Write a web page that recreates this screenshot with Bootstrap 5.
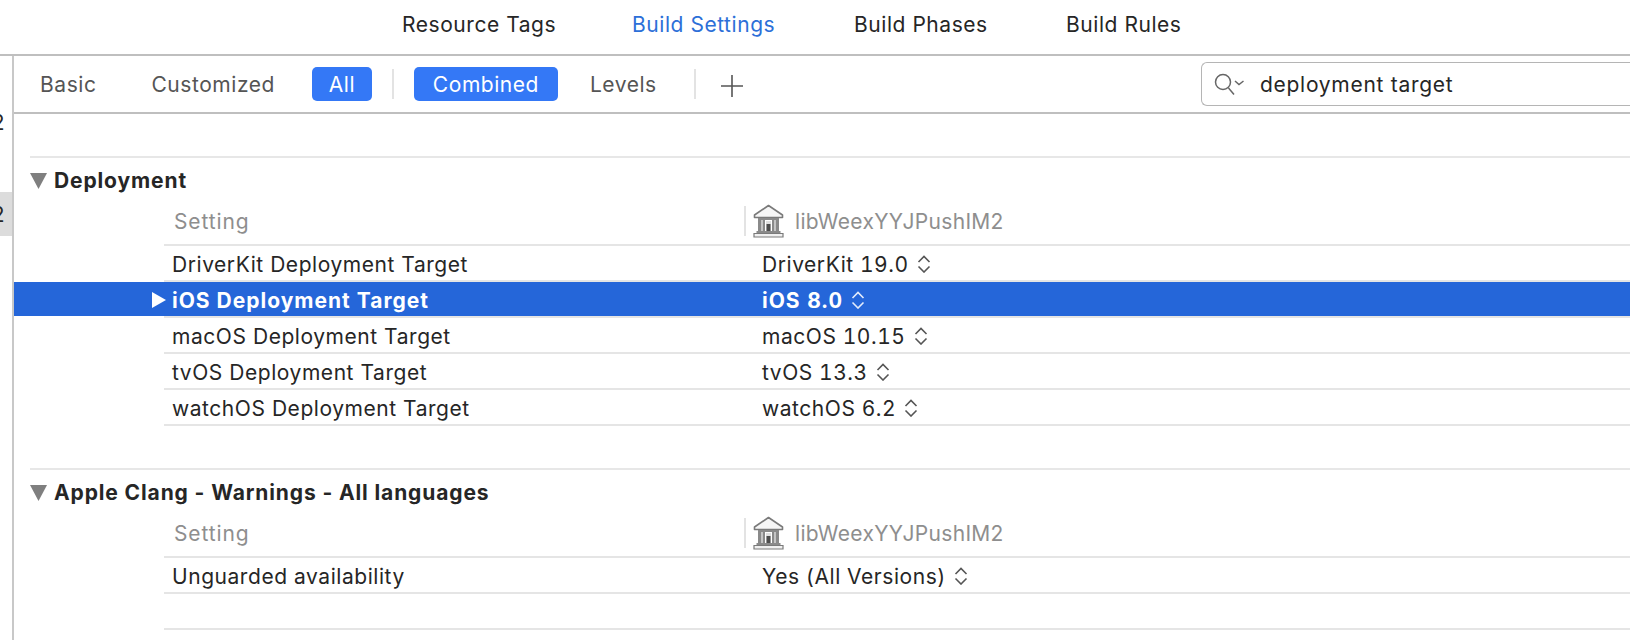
<!DOCTYPE html>
<html lang="en">
<head>
<meta charset="utf-8">
<title>Build Settings</title>
<link href="https://cdn.jsdelivr.net/npm/bootstrap@5.3.0/dist/css/bootstrap.min.css" rel="stylesheet">
<style>
html,body{height:640px;overflow:hidden;background:#fff}
body{font-family:Inter,"Liberation Sans",sans-serif;font-size:21px;letter-spacing:.55px;color:#262626;line-height:1}
.tabs-bar{height:56px;border-bottom:2px solid #bfbfbf;padding-left:402px;padding-bottom:6px}
.tab-item{width:230px}
.tab-item.tab-2{width:222px}
.tab-item.tab-3{width:212px}
.tab-active{color:#2c6fd8}
.shell{height:584px}
.side{width:14px;flex:none;border-right:2px solid #c8c8c8;overflow:hidden;padding-top:58px}
.side-cell{height:16px;width:12px;display:flex;align-items:center;line-height:1}
.side-clip{width:5px;overflow:hidden;display:flex;justify-content:flex-end;white-space:nowrap}
.side-gray{background:#dcdcdc;height:44px;margin-top:62px}
.tools{height:58px;border-bottom:2px solid #bfbfbf;padding-left:26px;overflow:hidden}
.tool-txt{color:#555}
.pill-on{background:#3478f6;color:#fff;height:34px;border-radius:5px;display:flex;align-items:center;justify-content:center}
.sep{width:2px;height:30px;background:#e3e3e3;flex:none}
.search-box{margin-left:auto;width:460px;height:44px;border:1px solid #b5b5b5;border-right:0;border-radius:6px 0 0 6px;padding-left:12px;margin-right:-31px;flex:none;color:#262626}
.body-pane{padding-top:42px}
.rule-full{height:2px;background:#e7e7e7;margin-left:16px}
.rule-row{height:2px;background:#e5e5e5;margin-left:150px}
.sec-head{height:44px;padding-left:16px;font-weight:700;padding-top:1px;letter-spacing:.88px}
.col-head{height:42px;color:#8e8e8e;padding-left:160px;padding-bottom:4px}
.rowline{height:34px;padding-top:2px}
.name-cell{width:748px;flex:none;padding-left:158px;position:relative}
.sel-row{background:#2566d9;color:#fff;font-weight:700;letter-spacing:1px}
.disc{position:absolute;left:137px;top:50%;margin-top:-8px}
.col-b{display:flex;align-items:center;font-variant-numeric:tabular-nums}
.chev{margin-left:8px;flex:none;color:#555}
.chev-w{color:#e4ecfb}
.bottom-gap{height:42px}
.spacer-row{height:34px}
.ms-btn1{margin-left:55px}
.pill-a{width:60px;margin-left:37px}
.sep-a{margin:0 20px}
.pill-b{width:144px}
.lv{margin-left:32px}
.sep-b{margin-left:37px}
.plus{margin-left:24px;margin-top:4px}
.q-text{margin-left:14px;letter-spacing:.72px}
.tri{margin-right:6px}
.col-name-h{width:570px;flex:none;letter-spacing:.9px}
.sep-c{margin-right:6px}
.bank-txt{margin-left:10px;letter-spacing:.3px}
.bank{flex:none}
</style>
</head>
<body>
<div class="tabs-bar d-flex align-items-center">
  <div class="tab-item">Resource Tags</div>
  <div class="tab-item tab-2 tab-active">Build Settings</div>
  <div class="tab-item tab-3">Build Phases</div>
  <div>Build Rules</div>
</div>
<div class="shell d-flex">
  <div class="side">
    <div class="side-cell"><span class="side-clip"><span>2</span></span></div>
    <div class="side-cell side-gray"><span class="side-clip"><span>2</span></span></div>
  </div>
  <div class="flex-grow-1 overflow-hidden">
    <div class="tools d-flex align-items-center">
      <span class="tool-txt">Basic</span>
      <span class="tool-txt ms-btn1">Customized</span>
      <span class="pill-on pill-a">All</span>
      <span class="sep sep-a"></span>
      <span class="pill-on pill-b">Combined</span>
      <span class="tool-txt lv">Levels</span>
      <span class="sep sep-b"></span>
      <svg class="plus" width="24" height="24" viewBox="0 0 24 24"><path d="M12 1v22M1 12h22" stroke="#555" stroke-width="1.6" fill="none"/></svg>
      <div class="search-box d-flex align-items-center">
        <svg width="32" height="26" viewBox="0 0 32 26" fill="none" stroke="#666" stroke-width="1.5"><circle cx="9" cy="11" r="7.5"/><path d="M14.5 17l5.5 6.5"/><path d="M21 10l4 3.5 4.5-3.5"/></svg>
        <span class="q-text">deployment target</span>
      </div>
    </div>
    <div class="body-pane">
      <div class="rule-full"></div>
      <div class="sec-head d-flex align-items-center"><svg class="tri" width="18" height="16" viewBox="0 0 18 16"><path d="M0 0h17L8.5 16z" fill="#7f7f7f"/></svg><span>Deployment</span></div>
      <div class="col-head d-flex align-items-center">
        <span class="col-name-h">Setting</span><span class="sep sep-c"></span>
        <svg class="bank" width="33" height="34" viewBox="0 0 33 34"><use href="#bank"/></svg><span class="bank-txt">libWeexYYJPushIM2</span>
      </div>
      <div class="rule-row"></div>
      <div class="rowline d-flex align-items-center"><div class="name-cell">DriverKit Deployment Target</div><div class="col-b">DriverKit 19.0<svg class="chev" width="14" height="18" viewBox="0 0 14 18"><use href="#chev"/></svg></div></div>
      <div class="rule-row"></div>
      <div class="rowline sel-row d-flex align-items-center"><div class="name-cell"><svg class="disc" width="16" height="16" viewBox="0 0 16 16"><path d="M1 0l14 8-14 8z" fill="#fff"/></svg>iOS Deployment Target</div><div class="col-b">iOS 8.0<svg class="chev chev-w" width="14" height="18" viewBox="0 0 14 18"><use href="#chev"/></svg></div></div>
      <div class="rule-row"></div>
      <div class="rowline d-flex align-items-center"><div class="name-cell">macOS Deployment Target</div><div class="col-b">macOS 10.15<svg class="chev" width="14" height="18" viewBox="0 0 14 18"><use href="#chev"/></svg></div></div>
      <div class="rule-row"></div>
      <div class="rowline d-flex align-items-center"><div class="name-cell">tvOS Deployment Target</div><div class="col-b">tvOS 13.3<svg class="chev" width="14" height="18" viewBox="0 0 14 18"><use href="#chev"/></svg></div></div>
      <div class="rule-row"></div>
      <div class="rowline d-flex align-items-center"><div class="name-cell">watchOS Deployment Target</div><div class="col-b">watchOS 6.2<svg class="chev" width="14" height="18" viewBox="0 0 14 18"><use href="#chev"/></svg></div></div>
      <div class="rule-row"></div>
      <div class="bottom-gap"></div>
      <div class="rule-full"></div>
      <div class="sec-head d-flex align-items-center"><svg class="tri" width="18" height="16" viewBox="0 0 18 16"><path d="M0 0h17L8.5 16z" fill="#7f7f7f"/></svg><span>Apple Clang - Warnings - All languages</span></div>
      <div class="col-head d-flex align-items-center">
        <span class="col-name-h">Setting</span><span class="sep sep-c"></span>
        <svg class="bank" width="33" height="34" viewBox="0 0 33 34"><use href="#bank"/></svg><span class="bank-txt">libWeexYYJPushIM2</span>
      </div>
      <div class="rule-row"></div>
      <div class="rowline d-flex align-items-center"><div class="name-cell">Unguarded availability</div><div class="col-b">Yes (All Versions)<svg class="chev" width="14" height="18" viewBox="0 0 14 18"><use href="#chev"/></svg></div></div>
      <div class="rule-row"></div>
      <div class="spacer-row"></div>
      <div class="rule-row"></div>
    </div>
  </div>
</div>
<svg width="0" height="0" class="position-absolute">
  <defs>
    <g id="chev"><path d="M1.5 7L7 1.5 12.5 7M1.5 11.5L7 17l5.5-5.5" fill="none" stroke="currentColor" stroke-width="1.6"/></g>
    <g id="bank">
      <path d="M16.5 1.5L30.5 11v2.5h-28V11z" fill="#f6f6f6" stroke="#7a7a7a" stroke-width="1.6" stroke-linejoin="round"/>
      <path d="M6 14h21v2H6z" fill="#8a8a8a"/>
      <path d="M6 16h3.5v11H6zM10.5 16H13v11h-2.5zM20 16h2.5v11H20zM23.5 16H27v11h-3.5z" fill="#8a8a8a"/>
      <path d="M14 17h5v10h-5z" fill="#e0e0e0"/>
      <path d="M14.5 20h4v7h-4z" fill="#4d4d4d"/>
      <path d="M4.5 27h24v2h-24z" fill="#8a8a8a"/>
      <path d="M2 29.5h29v3.5H2z" fill="#f0f0f0" stroke="#7a7a7a" stroke-width="1.2"/>
    </g>
  </defs>
</svg>
</body>
</html>
